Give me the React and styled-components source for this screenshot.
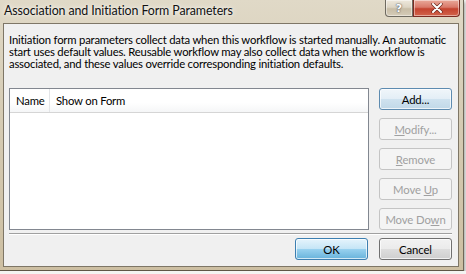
import React from 'react'
import styled, { createGlobalStyle } from 'styled-components'

const GlobalStyle = createGlobalStyle`
  html, body {
    margin: 0;
    padding: 0;
    background: #f4f4f2;
  }
  body {
    font-family: Lato, "Liberation Sans", sans-serif;
  }
`

const Window = styled.div`
  width: 464px;
  height: 271px;
  box-sizing: border-box;
  display: flex;
  flex-direction: column;
  background: linear-gradient(180deg, #e0d9c7 0%, #d6ccb5 40%, #cdbfa2 100%);
  border-right: 1px solid #6f6756;
  border-bottom: 1px solid #5e5646;
  box-shadow: 1px 2px 3px rgba(0, 0, 0, 0.35);
`

const TitleBar = styled.div`
  height: 23px;
  display: flex;
  align-items: flex-start;
  justify-content: space-between;
  padding: 0 3px 0 4px;
  flex-shrink: 0;
`

const Title = styled.div`
  font-size: 12.4px;
  line-height: 20px;
  padding-top: 1px;
  color: #111;
  letter-spacing: -0.1px;
  text-shadow: 0 0 6px rgba(255, 255, 255, 0.9), 0 0 3px rgba(255, 255, 255, 0.7);
  white-space: nowrap;
`

const Caption = styled.div`
  display: flex;
`

const CaptionButton = styled.div`
  width: ${p => p.$w}px;
  height: 17px;
  box-sizing: border-box;
  display: flex;
  align-items: center;
  justify-content: center;
  border: 1px solid ${p => (p.$close ? '#7a2b22' : '#6e6a60')};
  border-top: none;
  border-radius: ${p => (p.$close ? '0 0 4px 0' : '0 0 0 4px')};
  background: ${p =>
    p.$close
      ? 'linear-gradient(180deg, #e9a99a 0%, #d9796a 45%, #c4432f 55%, #d2644c 100%)'
      : 'linear-gradient(180deg, #eee8dc 0%, #ddd5c4 45%, #c8bda6 55%, #d5ccb8 100%)'};
  box-shadow: inset 0 0 0 1px rgba(255, 255, 255, 0.45);
  color: #fff;
  font-family: "DejaVu Sans", sans-serif;
  font-weight: bold;
  font-size: 11px;
  text-shadow: 0 0 1px #555, 0 0 2px #555;
`

const Content = styled.div`
  flex: 1;
  margin: 0 4px 4px 3px;
  border: 1px solid #7e7666;
  background: #f0f0f0;
  display: flex;
  flex-direction: column;
  padding: 10px 6px 6px 5px;
  font-size: 11.3px;
  letter-spacing: -0.2px;
  color: #000;
`

const Description = styled.p`
  margin: 0;
  height: 54px;
  line-height: 11.8px;
`

const MainRow = styled.div`
  display: flex;
  gap: 10px;
  height: 142px;
`

const ListBox = styled.div`
  flex: 1;
  background: #fff;
  border: 1px solid #828790;
  display: flex;
  flex-direction: column;
`

const HeaderRow = styled.div`
  height: 23px;
  display: flex;
  background: linear-gradient(180deg, #ffffff 0%, #ffffff 60%, #f5f6f7 100%);
  border-bottom: 1px solid #d5d5d5;
`

const HeaderCell = styled.div`
  width: ${p => p.$w || 'auto'};
  flex: ${p => (p.$w ? '0 0 auto' : '1')};
  padding-left: 6px;
  display: flex;
  align-items: center;
  border-right: ${p => (p.$w ? '1px solid #e3e5e8' : 'none')};
`

const ButtonColumn = styled.div`
  display: flex;
  flex-direction: column;
  gap: 8px;
`

const Button = styled.button`
  width: 73px;
  height: 22px;
  box-sizing: border-box;
  padding: 0;
  font-family: inherit;
  font-size: 11.3px;
  letter-spacing: -0.1px;
  border-radius: 3px;
  color: ${p => (p.disabled ? '#a0a0a0' : '#000')};
  border: 1px solid ${p =>
    p.disabled ? '#c4c4c4' : p.$variant === 'hot' ? '#3c7fb1' : p.$variant === 'default' ? '#5d8bb0' : '#707070'};
  background: ${p =>
    p.disabled
      ? '#f4f4f4'
      : p.$variant === 'hot'
      ? 'linear-gradient(180deg, #e5f4fc 0%, #c4e5f6 50%, #98d1ef 51%, #68b3db 100%)'
      : p.$variant === 'default'
      ? 'linear-gradient(180deg, #f0f6fa 0%, #e3eef6 50%, #cfe2ef 51%, #c1d8e8 100%)'
      : 'linear-gradient(180deg, #f2f2f2 0%, #ebebeb 50%, #dddddd 51%, #cfcfcf 100%)'};
  box-shadow: ${p => (p.disabled ? 'none' : 'inset 0 0 0 1px rgba(255, 255, 255, 0.7)')};
  u {
    text-underline-offset: 1px;
  }
`

const Separator = styled.div`
  margin-top: 3px;
  height: 1px;
  background: #a0a0a0;
  border-bottom: 1px solid #fff;
`

const Footer = styled.div`
  margin-top: 3px;
  display: flex;
  justify-content: flex-end;
  gap: 11px;
`

function CloseGlyph() {
  return (
    <svg width="12" height="10" viewBox="0 0 12 10">
      <path d="M2 1 L10 9 M10 1 L2 9" stroke="#6b2a20" strokeWidth="3.4" strokeLinecap="round" />
      <path d="M2 1 L10 9 M10 1 L2 9" stroke="#fff" strokeWidth="2" strokeLinecap="round" />
    </svg>
  )
}

export default function App() {
  return (
    <>
      <GlobalStyle />
      <Window>
        <TitleBar>
          <Title>Association and Initiation Form Parameters</Title>
          <Caption>
            <CaptionButton $w={28}>?</CaptionButton>
            <CaptionButton $w={47} $close>
              <CloseGlyph />
            </CaptionButton>
          </Caption>
        </TitleBar>
        <Content>
          <Description>
            Initiation form parameters collect data when this workflow is started manually. An automatic
            start uses default values. Reusable workflow may also collect data when the workflow is
            associated, and these values override corresponding initiation defaults.
          </Description>
          <MainRow>
            <ListBox>
              <HeaderRow>
                <HeaderCell $w="33px">Name</HeaderCell>
                <HeaderCell>Show on Form</HeaderCell>
              </HeaderRow>
            </ListBox>
            <ButtonColumn>
              <Button $variant="default">Add...</Button>
              <Button disabled><u>M</u>odify...</Button>
              <Button disabled><u>R</u>emove</Button>
              <Button disabled>Move <u>U</u>p</Button>
              <Button disabled>Move Do<u>w</u>n</Button>
            </ButtonColumn>
          </MainRow>
          <Separator />
          <Footer>
            <Button $variant="hot">OK</Button>
            <Button>Cancel</Button>
          </Footer>
        </Content>
      </Window>
    </>
  )
}
